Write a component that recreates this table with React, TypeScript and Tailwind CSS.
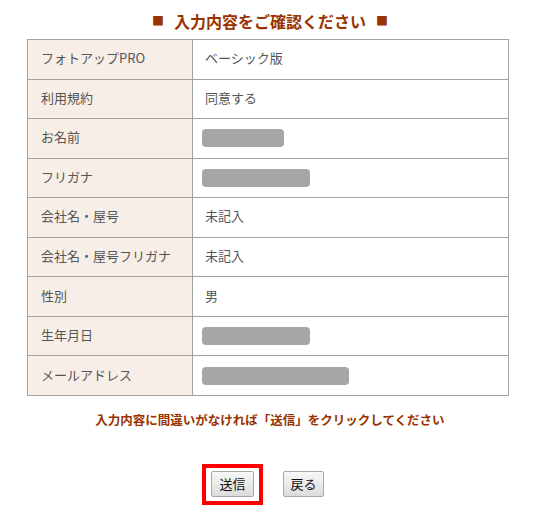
const rows: { label: string; value?: string; bar?: number }[] = [
  { label: "フォトアップPRO", value: "ベーシック版" },
  { label: "利用規約", value: "同意する" },
  { label: "お名前", bar: 82 },
  { label: "フリガナ", bar: 108 },
  { label: "会社名・屋号", value: "未記入" },
  { label: "会社名・屋号フリガナ", value: "未記入" },
  { label: "性別", value: "男" },
  { label: "生年月日", bar: 108 },
  { label: "メールアドレス", bar: 147 },
];

const font = "font-['Noto_Sans_CJK_JP','Noto_Sans',sans-serif]";

export default function App() {
  return (
    <div className={`min-h-[511px] w-[540px] bg-white ${font}`}>
      <h1 className="flex h-[39px] items-center justify-center gap-[10px] pt-[2px] text-[16px] font-bold text-[#993300]">
        <span className="text-[12px]">■</span>
        <span>入力内容をご確認ください</span>
        <span className="text-[12px]">■</span>
      </h1>

      <table className="ml-[27px] w-[482px] border-collapse border border-[#a3a3a3] text-[13px] text-[#555]">
        <tbody>
          {rows.map((r) => (
            <tr key={r.label} className="h-[39.55px] border-b border-[#a3a3a3]">
              <td className="w-[165px] border-r border-[#a3a3a3] bg-[#f7efe7] pb-[3px] pl-[13px] align-middle leading-none">
                {r.label}
              </td>
              <td className="pl-[9px] align-middle leading-none">
                {r.bar ? (
                  <div
                    className="h-[18px] rounded-[4px] bg-[#a6a6a6]"
                    style={{ width: r.bar }}
                  />
                ) : (
                  <span className="relative -top-[1.5px] pl-[3px]">{r.value}</span>
                )}
              </td>
            </tr>
          ))}
        </tbody>
      </table>

      <p className="mt-[15px] text-center text-[12.5px] font-bold text-[#993300]">
        入力内容に間違いがなければ「送信」をクリックしてください
      </p>

      <div className="mt-[34px] flex items-center justify-center gap-[20px] pr-[14px]">
        <div className="flex h-[41px] w-[61px] items-center justify-center border-[4px] border-[#ff0000]">
          <button
            type="button"
            className="h-[26px] w-[43px] rounded-[2px] border border-[#a8a8a8] bg-gradient-to-b from-[#f8f8f8] to-[#dcdcdc] text-[13px] text-[#111]"
          >
            送信
          </button>
        </div>
        <button
          type="button"
          className="h-[26px] w-[41px] rounded-[2px] border border-[#a8a8a8] bg-gradient-to-b from-[#f8f8f8] to-[#dcdcdc] text-[13px] text-[#111]"
        >
          戻る
        </button>
      </div>
    </div>
  );
}
